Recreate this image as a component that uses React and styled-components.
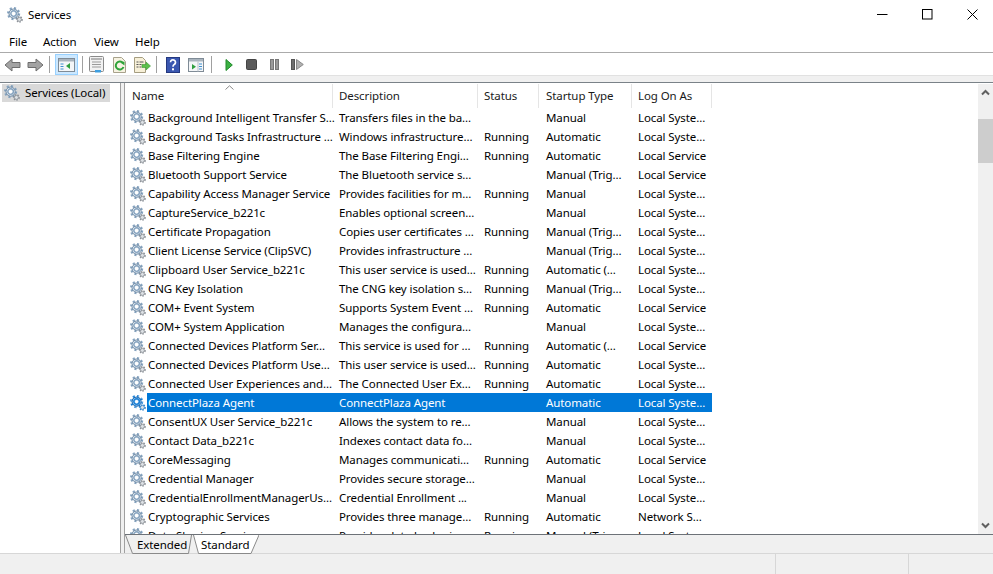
import styled, { createGlobalStyle } from "styled-components";

const GlobalStyle = createGlobalStyle`
  html, body {
    margin: 0;
    padding: 0;
    height: 100%;
    background: #fff;
  }
  body {
    font-family: "Noto Sans", "Open Sans", sans-serif;
    font-size: 11.5px;
    letter-spacing: -0.09px;
    color: #000;
    overflow: hidden;
  }
`;

const columns = "208px 145px 61px 93px 80px";

const services = [
  ["Background Intelligent Transfer S...", "Transfers files in the ba...", "", "Manual", "Local Syste..."],
  ["Background Tasks Infrastructure ...", "Windows infrastructure...", "Running", "Automatic", "Local Syste..."],
  ["Base Filtering Engine", "The Base Filtering Engi...", "Running", "Automatic", "Local Service"],
  ["Bluetooth Support Service", "The Bluetooth service s...", "", "Manual (Trig...", "Local Service"],
  ["Capability Access Manager Service", "Provides facilities for m...", "Running", "Manual", "Local Syste..."],
  ["CaptureService_b221c", "Enables optional screen...", "", "Manual", "Local Syste..."],
  ["Certificate Propagation", "Copies user certificates ...", "Running", "Manual (Trig...", "Local Syste..."],
  ["Client License Service (ClipSVC)", "Provides infrastructure ...", "", "Manual (Trig...", "Local Syste..."],
  ["Clipboard User Service_b221c", "This user service is used...", "Running", "Automatic (...", "Local Syste..."],
  ["CNG Key Isolation", "The CNG key isolation s...", "Running", "Manual (Trig...", "Local Syste..."],
  ["COM+ Event System", "Supports System Event ...", "Running", "Automatic", "Local Service"],
  ["COM+ System Application", "Manages the configura...", "", "Manual", "Local Syste..."],
  ["Connected Devices Platform Ser...", "This service is used for ...", "Running", "Automatic (...", "Local Service"],
  ["Connected Devices Platform Use...", "This user service is used...", "Running", "Automatic", "Local Syste..."],
  ["Connected User Experiences and...", "The Connected User Ex...", "Running", "Automatic", "Local Syste..."],
  ["ConnectPlaza Agent", "ConnectPlaza Agent", "", "Automatic", "Local Syste..."],
  ["ConsentUX User Service_b221c", "Allows the system to re...", "", "Manual", "Local Syste..."],
  ["Contact Data_b221c", "Indexes contact data fo...", "", "Manual", "Local Syste..."],
  ["CoreMessaging", "Manages communicati...", "Running", "Automatic", "Local Service"],
  ["Credential Manager", "Provides secure storage...", "", "Manual", "Local Syste..."],
  ["CredentialEnrollmentManagerUs...", "Credential Enrollment ...", "", "Manual", "Local Syste..."],
  ["Cryptographic Services", "Provides three manage...", "Running", "Automatic", "Network S..."],
  ["Data Sharing Service", "Provides data brokering...", "Running", "Manual (Trig...", "Local Syste..."],
];

const Window = styled.div`
  width: 993px;
  height: 574px;
  display: flex;
  flex-direction: column;
  background: #f0f0f0;
  overflow: hidden;
`;

const TitleBar = styled.div`
  height: 30px;
  flex: none;
  display: flex;
  align-items: center;
  background: #fff;
  padding-left: 7px;
  margin-right: -2px;
`;

const TitleText = styled.span`
  margin-left: 5px;
  margin-bottom: 1px;
  flex: 1;
`;

const WindowButton = styled.div`
  width: 45px;
  height: 30px;
  display: flex;
  align-items: center;
  justify-content: center;
  margin-top: -1px;
`;

const MenuBar = styled.div`
  height: 22px;
  flex: none;
  display: flex;
  align-items: center;
  background: #fff;
  border-bottom: 1px solid #ababab;
`;

const MenuItem = styled.span`
  width: ${(p) => p.$width}px;
  padding-left: 9px;
  box-sizing: border-box;
`;

const Toolbar = styled.div`
  height: 23px;
  flex: none;
  display: flex;
  align-items: center;
  padding: 1px 0 0 1px;
  box-sizing: border-box;
  background: #fff;
  border-bottom: 1px solid #e1e1e1;
`;

const ToolButton = styled.div`
  width: 23px;
  height: 21px;
  flex: none;
  box-sizing: border-box;
  display: flex;
  align-items: center;
  justify-content: center;
  background: ${(p) => (p.$active ? "#cce8ff" : "transparent")};
  border: 1px solid ${(p) => (p.$active ? "#99d1ff" : "transparent")};
`;

const ToolSeparator = styled.div`
  width: 1px;
  height: 17px;
  flex: none;
  background: #a0a0a0;
  margin: 0 ${(p) => p.$after}px 0 ${(p) => p.$before}px;
`;

const ToolbarGap = styled.div`
  height: 7px;
  flex: none;
  box-sizing: border-box;
  border-bottom: 1px solid #7a8288;
`;

const Main = styled.div`
  flex: 1;
  min-height: 0;
  display: flex;
`;

const TreePane = styled.div`
  width: 121px;
  flex: none;
  box-sizing: border-box;
  background: #fff;
  border-right: 1px solid #a0a0a0;
  padding: 1px 10px 0 2px;
`;

const TreeItem = styled.div`
  height: 18px;
  display: flex;
  align-items: center;
  gap: 5px;
  padding-left: 2px;
  background: #d9d9d9;
  white-space: nowrap;
`;

const TreeLabel = styled.span`
  margin-bottom: 1px;
`;

const RightPane = styled.div`
  flex: 1;
  min-width: 0;
  display: flex;
  flex-direction: column;
  margin-left: 3px;
  border-left: 1px solid #a0a0a0;
`;

const ListArea = styled.div`
  height: 452px;
  flex: none;
  display: flex;
  background: #fff;
  border-bottom: 1px solid #6d7278;
  box-sizing: border-box;
`;

const ListColumn = styled.div`
  flex: 1;
  min-width: 0;
  overflow: hidden;
  padding-top: 1px;
`;

const HeaderRow = styled.div`
  position: relative;
  display: grid;
  grid-template-columns: ${columns};
  width: 587px;
  height: 24px;
`;

const HeaderCell = styled.div`
  display: flex;
  align-items: center;
  height: 24px;
  padding: 0 0 2px ${(p) => p.$inset}px;
  box-sizing: border-box;
  color: #1a1a1a;
  border-right: 1px solid #e5e5e5;
`;

const SortCaret = styled.svg`
  position: absolute;
  left: 100px;
  top: 1px;
`;

const Row = styled.div`
  display: grid;
  grid-template-columns: ${columns};
  width: 587px;
  height: 19px;
  align-items: center;
  white-space: nowrap;
`;

const NameCell = styled.div`
  display: flex;
  align-items: center;
  height: 19px;
  padding-left: 5px;
`;

const NameText = styled.span`
  margin-left: 1px;
  flex: 1;
  height: 19px;
  line-height: 19px;
  color: ${(p) => (p.$selected ? "#fff" : "#000")};
  background: ${(p) => (p.$selected ? "#0078d7" : "transparent")};
  padding-left: 1px;
`;

const Cell = styled.div`
  height: 19px;
  line-height: 19px;
  padding-left: ${(p) => p.$inset}px;
  color: ${(p) => (p.$selected ? "#fff" : "#000")};
  background: ${(p) => (p.$selected ? "#0078d7" : "transparent")};
  overflow: hidden;
`;

const ScrollBar = styled.div`
  width: 15px;
  flex: none;
  display: flex;
  flex-direction: column;
  background: #f0f0f0;
  margin-top: 1px;
`;

const ScrollButton = styled.div`
  height: 17px;
  flex: none;
  display: flex;
  align-items: center;
  justify-content: center;
`;

const ScrollThumb = styled.div`
  height: 44px;
  flex: none;
  margin-top: 18px;
  background: #cdcdcd;
`;

const ScrollTrack = styled.div`
  flex: 1;
`;

const TabStrip = styled.div`
  height: 19px;
  flex: none;
  display: flex;
`;

const Tab = styled.div`
  position: relative;
  width: ${(p) => p.$width}px;
  height: 19px;
  flex: none;
  padding-left: ${(p) => p.$inset}px;
  box-sizing: border-box;
  line-height: 20px;
`;

const TabShape = styled.svg`
  position: absolute;
  left: 0;
  top: 0;
`;

const TabLabel = styled.span`
  position: relative;
`;

const StatusBar = styled.div`
  height: 20px;
  flex: none;
  display: flex;
  justify-content: flex-end;
  border-top: 1px solid #d7d7d7;
`;

const StatusPane = styled.div`
  width: ${(p) => p.$width}px;
  flex: none;
  box-sizing: border-box;
  border-left: 1px solid #d7d7d7;
`;

function Gear({ selected }) {
  const body = selected ? "#1c80d6" : "#86a3bf";
  const dark = selected ? "#0f5ea8" : "#6a87a3";
  const light = selected ? "#8fc3ee" : "#e6edf3";
  const small = selected ? "#2a7fc8" : "#8a8f96";
  return (
    <svg width="16" height="16" viewBox="0 0 16 16" style={{ flex: "none" }}>
      <circle cx="6.6" cy="6.6" r="5.4" fill="none" stroke={body} strokeWidth="2.4" strokeDasharray="2 2.2" />
      <circle cx="6.6" cy="6.6" r="4.6" fill={light} stroke={dark} strokeWidth="1" />
      <circle cx="6.6" cy="6.6" r="2.8" fill="none" stroke={body} strokeWidth="1.4" />
      <circle cx="6.6" cy="6.6" r="1.6" fill="#fff" />
      <circle cx="12.4" cy="12.4" r="2.6" fill="none" stroke={small} strokeWidth="1.6" strokeDasharray="1.4 1.2" />
      <circle cx="12.4" cy="12.4" r="2" fill="#dde1e5" stroke={small} strokeWidth="0.8" />
      {selected && (
        <circle cx="6.6" cy="6.6" r="5.6" fill="none" stroke="#fff" strokeWidth="1" strokeDasharray="1 2" opacity="0.7" />
      )}
    </svg>
  );
}

function ArrowIcon({ flip }) {
  return (
    <svg width="17" height="14" viewBox="0 0 17 14" style={flip ? { transform: "scaleX(-1)" } : undefined}>
      <path d="M1 7 L8 1 V4.5 H16 V9.5 H8 V13 Z" fill="#a3a3a3" stroke="#6e6e6e" />
    </svg>
  );
}

function ConsoleIcon() {
  return (
    <svg width="17" height="15" viewBox="0 0 17 15">
      <rect x="0.5" y="1.5" width="16" height="13" fill="#f4f6f8" stroke="#7f8b96" />
      <rect x="1" y="2" width="15" height="2.5" fill="#a9b4be" />
      <path d="M2.5 6.5h3v1h-3zM2.5 9h3v1h-3zM2.5 11.5h3v1h-3z" fill="#3f8fcf" />
      <path d="M12 6 L8 9 L12 12 Z" fill="#2f9e3f" />
    </svg>
  );
}

function PropertiesIcon() {
  return (
    <svg width="15" height="17" viewBox="0 0 15 17">
      <rect x="0.5" y="0.5" width="14" height="15" rx="1" fill="#f2f2f2" stroke="#8a8a8a" />
      <rect x="2" y="2" width="11" height="2" fill="#b5b5b5" />
      <path d="M3 6h9M3 8.500h9M3 11h9" stroke="#9a9a9a" />
      <rect x="6" y="14" width="6" height="2.500" fill="#3f9fe0" />
    </svg>
  );
}

function RefreshIcon() {
  return (
    <svg width="15" height="16" viewBox="0 0 15 16">
      <path d="M1.500 0.500h8l4 4v11h-12z" fill="#f7f3e2" stroke="#a8a28c" />
      <path d="M11 6.200A4 4 0 1 0 11.500 10" fill="none" stroke="#2fa33a" strokeWidth="2" />
      <path d="M8.500 5.500l4-1v4z" fill="#2fa33a" />
    </svg>
  );
}

function ExportIcon() {
  return (
    <svg width="17" height="16" viewBox="0 0 17 16">
      <path d="M0.500 0.500h8l3 3v12h-11z" fill="#f7f0d8" stroke="#a59d80" />
      <path d="M2.500 5h2M2.500 7.500h2M2.500 10h2M5.500 5h4M5.500 7.500h2M5.500 10h2" stroke="#555" />
      <path d="M8 7.500h4V5l4.500 4-4.500 4v-2.500H8z" fill="#5cc04a" stroke="#3c9a34" strokeWidth="0.6" />
    </svg>
  );
}

function HelpIcon() {
  return (
    <svg width="14" height="16" viewBox="0 0 14 16">
      <rect width="14" height="16" fill="#3a57b0" />
      <rect x="0.500" y="0.500" width="13" height="15" fill="none" stroke="#24387f" />
      <path d="M4.500 5.200a2.500 2.500 0 1 1 3.700 2.300c-.9.500-1.200 1-1.200 2.300" fill="none" stroke="#fff" strokeWidth="1.700" />
      <rect x="6" y="11.300" width="2" height="2" fill="#fff" />
    </svg>
  );
}

function ActionPaneIcon() {
  return (
    <svg width="16" height="14" viewBox="0 0 16 14">
      <rect x="0.500" y="0.500" width="15" height="13" fill="#f4f6f8" stroke="#7f8b96" />
      <rect x="1" y="1" width="14" height="2.500" fill="#a9b4be" />
      <path d="M4 6 L8 8.800 L4 11.500 Z" fill="#2f9e3f" />
      <path d="M11 5.500h3v1h-3zM11 8h3v1h-3zM11 10.500h3v1h-3z" fill="#3f8fcf" />
      <path d="M10 3.500v10" stroke="#b8c0c8" />
    </svg>
  );
}

function PlayIcon() {
  return (
    <svg width="8" height="12" viewBox="0 0 8 12">
      <path d="M1 0.500 L7.300 6 L1 11.500 Z" fill="#3cb043" stroke="#1f8a2a" />
    </svg>
  );
}

function StopIcon() {
  return (
    <svg width="11" height="11" viewBox="0 0 11 11">
      <rect x="0.500" y="0.500" width="10" height="10" rx="1" fill="#5a5a5a" stroke="#444" />
    </svg>
  );
}

function PauseIcon() {
  return (
    <svg width="9" height="11" viewBox="0 0 9 11">
      <rect x="0.500" y="0.500" width="3" height="10" fill="#9a9a9a" stroke="#777" />
      <rect x="5.500" y="0.500" width="3" height="10" fill="#9a9a9a" stroke="#777" />
    </svg>
  );
}

function ResumeIcon() {
  return (
    <svg width="13" height="11" viewBox="0 0 13 11">
      <rect x="0.500" y="0.500" width="3" height="10" fill="#6e6e6e" stroke="#555" />
      <path d="M5.500 0.500 L12.300 5.500 L5.500 10.500 Z" fill="#b0b0b0" stroke="#8a8a8a" />
    </svg>
  );
}

function ServiceRow({ service }) {
  const selected = service[0] === "ConnectPlaza Agent";
  return (
    <Row>
      <NameCell>
        <Gear selected={selected} />
        <NameText $selected={selected}>{service[0]}</NameText>
      </NameCell>
      <Cell $inset={6} $selected={selected}>{service[1]}</Cell>
      <Cell $inset={6} $selected={selected}>{service[2]}</Cell>
      <Cell $inset={7} $selected={selected}>{service[3]}</Cell>
      <Cell $inset={6} $selected={selected}>{service[4]}</Cell>
    </Row>
  );
}

export default function App() {
  return (
    <Window>
      <GlobalStyle />
      <TitleBar>
        <Gear />
        <TitleText>Services</TitleText>
        <WindowButton>
          <svg width="11" height="11" viewBox="0 0 11 11">
            <path d="M0 5.500h10.500" stroke="#000" />
          </svg>
        </WindowButton>
        <WindowButton>
          <svg width="11" height="11" viewBox="0 0 11 11">
            <rect x="0.500" y="0.500" width="9.500" height="9.500" fill="none" stroke="#000" />
          </svg>
        </WindowButton>
        <WindowButton>
          <svg width="11" height="11" viewBox="0 0 11 11">
            <path d="M0.500 0.500l10 10M10.500 0.500l-10 10" stroke="#000" />
          </svg>
        </WindowButton>
      </TitleBar>
      <MenuBar>
        <MenuItem $width={34}>File</MenuItem>
        <MenuItem $width={51}>Action</MenuItem>
        <MenuItem $width={41}>View</MenuItem>
        <MenuItem $width={45}>Help</MenuItem>
      </MenuBar>
      <Toolbar>
        <ToolButton><ArrowIcon /></ToolButton>
        <ToolButton><ArrowIcon flip /></ToolButton>
        <ToolSeparator $before={2} $after={5} />
        <ToolButton $active><ConsoleIcon /></ToolButton>
        <ToolSeparator $before={4} $after={2} />
        <ToolButton><PropertiesIcon /></ToolButton>
        <ToolButton><RefreshIcon /></ToolButton>
        <ToolButton><ExportIcon /></ToolButton>
        <ToolSeparator $before={2} $after={4} />
        <ToolButton><HelpIcon /></ToolButton>
        <ToolButton><ActionPaneIcon /></ToolButton>
        <ToolSeparator $before={4} $after={5} />
        <ToolButton><PlayIcon /></ToolButton>
        <ToolButton><StopIcon /></ToolButton>
        <ToolButton><PauseIcon /></ToolButton>
        <ToolButton><ResumeIcon /></ToolButton>
      </Toolbar>
      <ToolbarGap />
      <Main>
        <TreePane>
          <TreeItem>
            <Gear />
            <TreeLabel>Services (Local)</TreeLabel>
          </TreeItem>
        </TreePane>
        <RightPane>
          <ListArea>
            <ListColumn>
              <HeaderRow>
                <HeaderCell $inset={7}>Name</HeaderCell>
                <HeaderCell $inset={6}>Description</HeaderCell>
                <HeaderCell $inset={6}>Status</HeaderCell>
                <HeaderCell $inset={7}>Startup Type</HeaderCell>
                <HeaderCell $inset={6}>Log On As</HeaderCell>
                <SortCaret width="9" height="5" viewBox="0 0 9 5">
                  <path d="M0.500 4.500L4.500 0.800 8.500 4.500" fill="none" stroke="#8a8a8a" />
                </SortCaret>
              </HeaderRow>
              {services.map((service) => (
                <ServiceRow key={service[0]} service={service} />
              ))}
            </ListColumn>
            <ScrollBar>
              <ScrollButton>
                <svg width="9" height="7" viewBox="0 0 9 7">
                  <path d="M1 5.500L4.500 2 8 5.500" fill="none" stroke="#606060" strokeWidth="2" />
                </svg>
              </ScrollButton>
              <ScrollThumb />
              <ScrollTrack />
              <ScrollButton>
                <svg width="9" height="7" viewBox="0 0 9 7">
                  <path d="M1 1.500L4.500 5 8 1.500" fill="none" stroke="#606060" strokeWidth="2" />
                </svg>
              </ScrollButton>
            </ScrollBar>
          </ListArea>
          <TabStrip>
            <Tab $width={68} $inset={12}>
              <TabShape width="68" height="19" viewBox="0 0 68 19">
                <path d="M0.500 0 L7.500 18.500 H63.500 L66.500 0" fill="#f0f0f0" stroke="#8a8a8a" />
              </TabShape>
              <TabLabel>Extended</TabLabel>
            </Tab>
            <Tab $width={66} $inset={8}>
              <TabShape width="66" height="19" viewBox="0 0 66 19">
                <path d="M0.500 0 L5.500 18.500 H58 L66 0" fill="#fff" stroke="#8a8a8a" />
              </TabShape>
              <TabLabel>Standard</TabLabel>
            </Tab>
          </TabStrip>
        </RightPane>
      </Main>
      <StatusBar>
        <StatusPane $width={133} />
        <StatusPane $width={85} />
      </StatusBar>
    </Window>
  );
}
